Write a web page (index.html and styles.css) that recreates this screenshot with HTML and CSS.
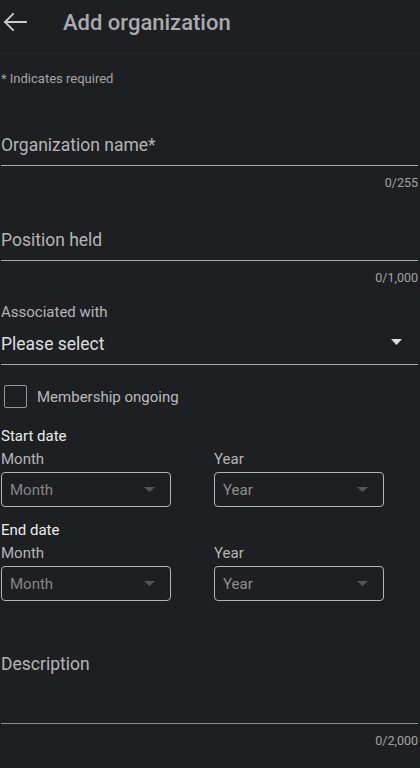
FILE: index.html
```html
<!DOCTYPE html>
<html>
	<head>
		<meta charset="UTF-8">
		<title>Add organization</title>
		<link rel="stylesheet" href="styles.css">
	</head>
	<body>
		<div class="header">
			<svg class="back" width="26" height="44" viewBox="0 0 26 44">
				<path d="M25 22H4M12 14L4 22L12 30" fill="none" stroke="#c9cacc" stroke-width="1.8" stroke-linecap="square"/>
			</svg>
			<div class="title">Add organization</div>
		</div>
		<div class="form">
			<div class="required">* Indicates required</div>

			<div class="field field-org">Organization name*</div>
			<div class="counter">0/255</div>

			<div class="field field-pos">Position held</div>
			<div class="counter">0/1,000</div>

			<div class="label label-assoc">Associated with</div>
			<div class="select">
				<span>Please select</span>
				<svg class="caret" width="11" height="6" viewBox="0 0 11 6"><path d="M0 0H11L5.5 6Z" fill="#dcdcdc"/></svg>
			</div>

			<div class="check-row">
				<span class="checkbox"></span>
				<span class="check-label">Membership ongoing</span>
			</div>

			<div class="date-block date-start">
				<div class="date-title">Start date</div>
				<div class="date-grid">
					<div class="label">Month</div>
					<div class="label">Year</div>
					<div class="box"><span>Month</span><svg width="11" height="5" viewBox="0 0 11 5"><path d="M0 0H11L5.5 5Z" fill="#54565a"/></svg></div>
					<div class="box"><span>Year</span><svg width="11" height="5" viewBox="0 0 11 5"><path d="M0 0H11L5.5 5Z" fill="#54565a"/></svg></div>
				</div>
			</div>

			<div class="date-block date-end">
				<div class="date-title">End date</div>
				<div class="date-grid">
					<div class="label">Month</div>
					<div class="label">Year</div>
					<div class="box"><span>Month</span><svg width="11" height="5" viewBox="0 0 11 5"><path d="M0 0H11L5.5 5Z" fill="#54565a"/></svg></div>
					<div class="box"><span>Year</span><svg width="11" height="5" viewBox="0 0 11 5"><path d="M0 0H11L5.5 5Z" fill="#54565a"/></svg></div>
				</div>
			</div>

			<div class="field field-desc">Description</div>
			<div class="counter">0/2,000</div>
		</div>
	</body>
</html>
```

FILE: styles.css
```css
* {
	margin: 0;
	padding: 0;
	box-sizing: border-box;
}

body {
	background-color: #1d1f23;
	font-family: Roboto, "Liberation Sans", sans-serif;
	color: #b9babc;
}

.header {
	display: flex;
	align-items: center;
	height: 54px;
	padding: 0 0 9px 1px;
	border-bottom: 1px solid #25272b;
}

.back {
	display: block;
}

.title {
	margin-left: 36px;
	font-size: 22px;
	font-weight: 500;
	color: #a9aaad;
}

.form {
	padding: 0 2px 0 1px;
}

.required {
	margin-top: 17px;
	font-size: 13px;
	line-height: 16px;
	color: #a4a5a8;
}

/* text inputs with underline */
.field {
	font-size: 17.5px;
	line-height: 24px;
	padding-bottom: 8px;
	border-bottom: 1px solid #a9aaac;
	color: #b4b5b7;
}

.field-org {
	margin-top: 46px;
}

.field-pos {
	margin-top: 37px;
}

.field-desc {
	margin-top: 51px;
	padding-bottom: 47px;
	border-bottom-color: #8e8f91;
}

.counter {
	margin-top: 9px;
	font-size: 12.5px;
	line-height: 16px;
	text-align: right;
	color: #a2a3a5;
}

.label {
	font-size: 15px;
	line-height: 20px;
	color: #b4b5b7;
}

.label-assoc {
	margin-top: 16px;
}

.select {
	display: flex;
	justify-content: space-between;
	align-items: center;
	margin-top: 10px;
	padding-bottom: 8px;
	border-bottom: 1px solid #a9aaac;
	font-size: 17.5px;
	line-height: 24px;
	color: #dedfe0;
}

.caret {
	margin-right: 16px;
	margin-top: -5px;
}

.check-row {
	display: flex;
	align-items: center;
	margin-top: 20px;
	padding-left: 3px;
}

.checkbox {
	width: 23px;
	height: 23px;
	border: 1.5px solid #97989a;
	border-radius: 2px;
}

.check-label {
	margin-left: 10px;
	font-size: 15px;
	line-height: 20px;
	color: #b9babc;
}

.date-start {
	margin-top: 18px;
}

.date-end {
	margin-top: 13px;
}

.date-title {
	font-size: 15px;
	line-height: 20px;
	color: #ececed;
}

.date-grid {
	display: grid;
	grid-template-columns: 170px 170px;
	column-gap: 43px;
	row-gap: 3px;
	margin-top: 3px;
}

.box {
	display: flex;
	justify-content: space-between;
	align-items: center;
	height: 35px;
	padding: 0 15px 0 8px;
	border: 1px solid #b3b4b6;
	border-radius: 4px;
	font-size: 15px;
	color: #85868a;
}

.box + .box span {
	color: #8d8e91;
}
```
